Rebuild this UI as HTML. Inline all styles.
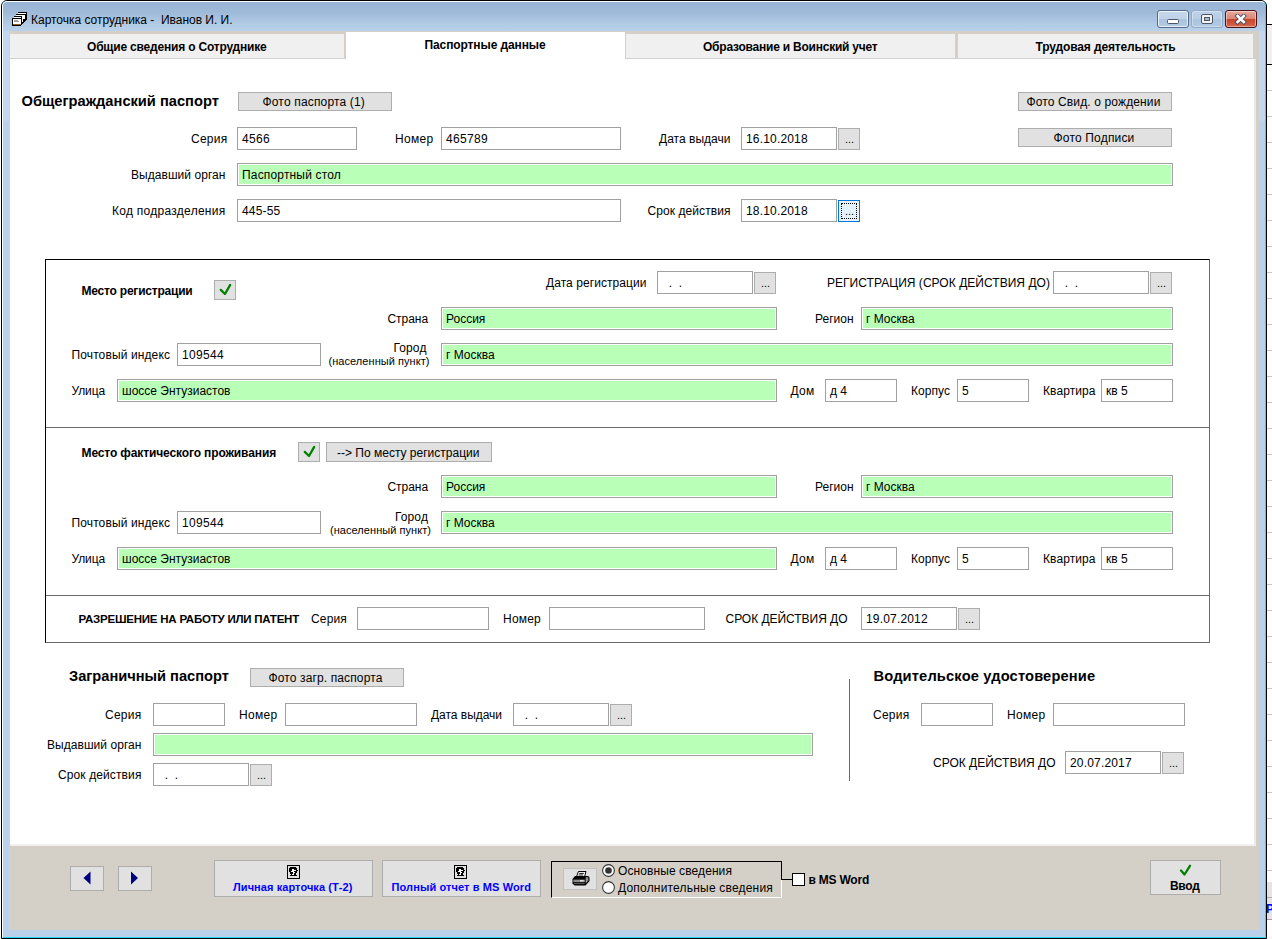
<!DOCTYPE html>
<html lang="ru"><head><meta charset="utf-8"><title>Карточка сотрудника</title>
<style>
html,body{margin:0;padding:0}
body{width:1272px;height:939px;overflow:hidden;background:#fff;position:relative;font-family:"Liberation Sans",sans-serif;font-size:12px;color:#000}
div,span,svg,i{position:absolute;box-sizing:border-box}
.t{white-space:nowrap}
.win{left:1px;top:0;width:1266px;height:939px;border:1px solid #000;border-radius:6px 6px 0 0;background:linear-gradient(#c3d7ee 0,#c3d7ee 118px,#b9d1ea 122px);overflow:hidden}
.win .hi{left:0;top:0;width:1264px;height:937px;border-style:solid;border-width:1px;border-color:#fff #27d5f5 #27d5f5 #fff;border-radius:5px 5px 0 0}
.tbar{left:1px;top:1px;width:1262px;height:29px;background:linear-gradient(#98b4d4 0,#9fbad9 35%,#b3cce6 80%,#b9d1ea 100%)}
.client{left:9px;top:31px;width:1250px;height:899px;background:#d4d0c8}
.tab{top:34px;height:25px;background:#f0f0f0;border-bottom:1px solid #d0d0d0}
.page{left:10px;top:59px;width:1246px;height:787px;background:#fff;border-right:2px solid #e9e9e9;border-bottom:2px solid #f0f0f0}
.in{background:#fff;border:1px solid #a0a0a0}
.in.g{background:#baffb8;box-shadow:inset 0 0 0 1px #fff}
.b{background:#e1e1e1;border:1px solid #adadad}
.b.bf{background:#e5f1fb;border-color:#0078d7}
.b.bf i{left:2px;top:2px;right:2px;bottom:2px;border:1px dotted #000}
.frame{border:1px solid;border-color:#000 #6a6a6a #6a6a6a #000}
.hl{height:1px;background:#6a6a6a}
.vl{width:1px;background:#6a6a6a}

</style></head><body>
<div class="bgr" style="left:1267px;top:0;width:5px;height:939px;background:#fff"><div style="left:0;top:24px;width:5px;height:41px;background:#f0f0f0;border-top:1px solid #000;border-bottom:1px solid #000"></div><div style="left:0;top:90px;width:5px;height:1px;background:#c8c8c8"></div><div style="left:0;top:116px;width:5px;height:1px;background:#c8c8c8"></div><div style="left:0;top:142px;width:5px;height:1px;background:#c8c8c8"></div><div style="left:0;top:168px;width:5px;height:1px;background:#c8c8c8"></div><div style="left:0;top:194px;width:5px;height:1px;background:#c8c8c8"></div><div style="left:0;top:220px;width:5px;height:1px;background:#c8c8c8"></div><div style="left:0;top:246px;width:5px;height:1px;background:#c8c8c8"></div><div style="left:0;top:272px;width:5px;height:1px;background:#c8c8c8"></div><div style="left:0;top:298px;width:5px;height:1px;background:#c8c8c8"></div><div style="left:0;top:324px;width:5px;height:1px;background:#c8c8c8"></div><div style="left:0;top:350px;width:5px;height:1px;background:#c8c8c8"></div><div style="left:0;top:376px;width:5px;height:1px;background:#c8c8c8"></div><div style="left:0;top:402px;width:5px;height:1px;background:#c8c8c8"></div><div style="left:0;top:428px;width:5px;height:1px;background:#c8c8c8"></div><div style="left:0;top:454px;width:5px;height:1px;background:#c8c8c8"></div><div style="left:0;top:480px;width:5px;height:1px;background:#c8c8c8"></div><div style="left:0;top:506px;width:5px;height:1px;background:#c8c8c8"></div><div style="left:0;top:532px;width:5px;height:1px;background:#c8c8c8"></div><div style="left:0;top:558px;width:5px;height:1px;background:#c8c8c8"></div><div style="left:0;top:584px;width:5px;height:1px;background:#c8c8c8"></div><div style="left:0;top:610px;width:5px;height:1px;background:#c8c8c8"></div><div style="left:0;top:636px;width:5px;height:1px;background:#c8c8c8"></div><div style="left:0;top:662px;width:5px;height:1px;background:#c8c8c8"></div><div style="left:0;top:688px;width:5px;height:1px;background:#c8c8c8"></div><div style="left:0;top:714px;width:5px;height:1px;background:#c8c8c8"></div><div style="left:0;top:740px;width:5px;height:1px;background:#c8c8c8"></div><div style="left:0;top:766px;width:5px;height:1px;background:#c8c8c8"></div><div style="left:0;top:792px;width:5px;height:1px;background:#c8c8c8"></div><div style="left:0;top:818px;width:5px;height:1px;background:#c8c8c8"></div><div style="left:0;top:844px;width:5px;height:1px;background:#c8c8c8"></div><div style="left:0;top:870px;width:5px;height:1px;background:#c8c8c8"></div><div style="left:0;top:882px;width:5px;height:38px;background:#e4e4e4;border-bottom:1px solid #a0a0a0"></div><div style="left:0;top:897px;width:5px;height:1px;background:#b0b0b0"></div><span class="t" style="left:-1px;top:902px;font-size:12px;line-height:15px;font-weight:bold;color:#00f">Р</span></div>
<div class="win"><div class="tbar"></div><div class="hi"></div></div>
<div class="client"></div>
<div class="tab" style="left:10px;width:334px"></div>
<div class="tab" style="left:626px;width:329px"></div>
<div class="tab" style="left:958px;width:295px"></div>
<div class="page"></div>
<div style="left:346px;top:32px;width:279px;height:30px;background:#fff"></div>
<svg width="17" height="16" viewBox="0 0 17 16" style="left:11px;top:11px" shape-rendering="crispEdges"><path d="M6.5 0.5 H15.5 V8.5 L10.5 14.5 H0.5 V6.5 H2.5 V4.5 H4.5 V2.5 H6.5 Z" fill="#000"/><path d="M7 1.5 H14.5 V3 H7 Z" fill="#fff"/><path d="M5 3.5 H13.5 V8 H11 V5 H5 Z" fill="#fff"/><path d="M3 5.5 H10 V7 H3 Z" fill="#fff"/><rect x="1.5" y="7.5" width="8.5" height="5" fill="#fff"/><path d="M11.5 6 V11" stroke="#fff" stroke-width="1"/><path d="M2.5 9 H7 M3 10.8 H8" stroke="#888" stroke-width="0.8"/><path d="M1.5 13 H10" stroke="#8a5a20" stroke-width="1"/></svg>
<div class="cb" style="left:1157px;top:10px;width:32px;height:18px;border:1px solid #54688a;border-radius:3px;background:linear-gradient(#c4d6ea 0,#c0d3e8 48%,#a9c2de 52%,#b4cbe4 100%);box-shadow:inset 0 0 0 1px rgba(255,255,255,.75)"><div style="left:9px;top:8px;width:12px;height:5px;background:#fff;border:1px solid #4b5566;border-radius:1.5px"></div></div>
<div class="cb" style="left:1191px;top:10px;width:32px;height:18px;border:1px solid #93a9c5;border-radius:3px;background:linear-gradient(#bdd1e8 0,#b9cee6 48%,#abc4df 52%,#b3cae3 100%);box-shadow:inset 0 0 0 1px rgba(255,255,255,.35)"><div style="left:9px;top:3px;width:12px;height:10px;background:#f4f4f4;border:1px solid #4b5566;border-radius:2px"><div style="left:2px;top:2px;width:6px;height:4px;border:1px solid #4b5566;background:#aab8cc"></div></div></div>
<div class="cb" style="left:1225px;top:10px;width:32px;height:18px;border:1px solid #4a1118;border-radius:3px;background:linear-gradient(#e9a99c 0,#dd8674 48%,#c8452b 52%,#d3674c 100%);box-shadow:inset 0 0 0 1px rgba(255,255,255,.45)"><svg width="14" height="11" viewBox="0 0 14 11" style="left:8px;top:3px"><path d="M3.6 2 L9.8 8 M9.8 2 L3.6 8" stroke="#4a4f66" stroke-width="4.4" stroke-linecap="square"/><path d="M3.6 2 L9.8 8 M9.8 2 L3.6 8" stroke="#fff" stroke-width="2.6" stroke-linecap="square"/></svg></div>

<span class="t" style="left:21.50px;top:92.00px;font-size:14.67px;line-height:18px;font-weight:bold;">Общегражданский паспорт</span>
<div class="b" style="left:238px;top:92px;width:154px;height:19px;"></div>
<span class="t" style="left:262.50px;top:94.00px;font-size:12px;line-height:16px;letter-spacing:0.166px;">Фото паспорта (1)</span>
<div class="b" style="left:1018px;top:92px;width:154px;height:19px;"></div>
<span class="t" style="left:1026.50px;top:94.00px;font-size:12px;line-height:16px;letter-spacing:0.130px;">Фото Свид. о рождении</span>
<div class="b" style="left:1018px;top:128px;width:154px;height:19px;"></div>
<span class="t" style="left:1053.50px;top:130.00px;font-size:12px;line-height:16px;letter-spacing:0.180px;">Фото Подписи</span>
<span class="t" style="left:191.00px;top:131.00px;font-size:12px;line-height:16px;letter-spacing:0.257px;">Серия</span>
<div class="in" style="left:237px;top:127px;width:120px;height:23px;"></div>
<span class="t" style="left:242.00px;top:131.00px;font-size:12px;line-height:16px;white-space:pre;letter-spacing:0.33px;">4566</span>
<span class="t" style="left:395.00px;top:131.00px;font-size:12px;line-height:16px;letter-spacing:0.313px;">Номер</span>
<div class="in" style="left:441px;top:127px;width:180px;height:23px;"></div>
<span class="t" style="left:446.00px;top:131.00px;font-size:12px;line-height:16px;white-space:pre;letter-spacing:0.33px;">465789</span>
<span class="t" style="left:659.00px;top:131.00px;font-size:12px;line-height:16px;letter-spacing:0.021px;">Дата выдачи</span>
<div class="in" style="left:741px;top:127px;width:96px;height:23px;"></div>
<span class="t" style="left:746.00px;top:131.00px;font-size:12px;line-height:16px;white-space:pre;letter-spacing:0.17px;">16.10.2018</span>
<div class="b" style="left:838px;top:128px;width:22px;height:22px;"></div>
<span class="t" style="left:845.00px;top:132.00px;font-size:11px;line-height:14px;">...</span>
<span class="t" style="left:131.00px;top:167.00px;font-size:12px;line-height:16px;letter-spacing:0.050px;">Выдавший орган</span>
<div class="in g" style="left:237px;top:163px;width:936px;height:23px;"></div>
<span class="t" style="left:242.00px;top:167.00px;font-size:12px;line-height:16px;white-space:pre;letter-spacing:0.17px;">Паспортный стол</span>
<span class="t" style="left:112.00px;top:203.00px;font-size:12px;line-height:16px;letter-spacing:0.272px;">Код подразделения</span>
<div class="in" style="left:237px;top:199px;width:384px;height:23px;"></div>
<span class="t" style="left:242.00px;top:203.00px;font-size:12px;line-height:16px;white-space:pre;letter-spacing:0.17px;">445-55</span>
<span class="t" style="left:647.50px;top:203.00px;font-size:12px;line-height:16px;letter-spacing:0.073px;">Срок действия</span>
<div class="in" style="left:741px;top:199px;width:96px;height:23px;"></div>
<span class="t" style="left:746.00px;top:203.00px;font-size:12px;line-height:16px;white-space:pre;letter-spacing:0.17px;">18.10.2018</span>
<div class="b bf" style="left:838px;top:200px;width:22px;height:22px;"><i></i></div>
<span class="t" style="left:845.00px;top:204.00px;font-size:11px;line-height:14px;">...</span>
<div class="frame" style="left:45px;top:259px;width:1165px;height:384px"></div>
<div class="hl" style="left:46px;top:427px;width:1163px"></div>
<div class="hl" style="left:46px;top:595px;width:1163px"></div>
<span class="t" style="left:81.50px;top:283.00px;font-size:12px;line-height:16px;letter-spacing:-0.213px;font-weight:bold;">Место регистрации</span>
<div class="b" style="left:214px;top:280px;width:22px;height:20px;"><svg width="22" height="20" viewBox="0 0 22 20" style="left:-1px;top:-1px"><path d="M6.8 9.9 L11 14 L16.2 4.9" fill="none" stroke="#008000" stroke-width="2.3" stroke-linecap="round" stroke-linejoin="round"/></svg></div>
<span class="t" style="left:546.00px;top:275.00px;font-size:12px;line-height:16px;letter-spacing:0.066px;">Дата регистрации</span>
<div class="in" style="left:657px;top:271px;width:96px;height:23px;"></div>
<span class="t" style="left:662.00px;top:275.00px;font-size:12px;line-height:16px;white-space:pre;letter-spacing:0.00px;">  .  .</span>
<div class="b" style="left:754px;top:272px;width:22px;height:22px;"></div>
<span class="t" style="left:761.00px;top:276.00px;font-size:11px;line-height:14px;">...</span>
<span class="t" style="left:827.00px;top:275.00px;font-size:12px;line-height:16px;letter-spacing:0.035px;">РЕГИСТРАЦИЯ (СРОК ДЕЙСТВИЯ ДО)</span>
<div class="in" style="left:1053px;top:271px;width:96px;height:23px;"></div>
<span class="t" style="left:1058.00px;top:275.00px;font-size:12px;line-height:16px;white-space:pre;letter-spacing:0.00px;">  .  .</span>
<div class="b" style="left:1150px;top:272px;width:22px;height:22px;"></div>
<span class="t" style="left:1157.00px;top:276.00px;font-size:11px;line-height:14px;">...</span>
<span class="t" style="left:387.50px;top:311.00px;font-size:12px;line-height:16px;letter-spacing:-0.051px;">Страна</span>
<div class="in g" style="left:441px;top:307px;width:336px;height:23px;"></div>
<span class="t" style="left:446.00px;top:311.00px;font-size:12px;line-height:16px;white-space:pre;letter-spacing:0.00px;">Россия</span>
<span class="t" style="left:815.00px;top:311.00px;font-size:12px;line-height:16px;">Регион</span>
<div class="in g" style="left:861px;top:307px;width:312px;height:23px;"></div>
<span class="t" style="left:866.00px;top:311.00px;font-size:12px;line-height:16px;white-space:pre;letter-spacing:0.00px;">г Москва</span>
<span class="t" style="left:71.50px;top:347.00px;font-size:12px;line-height:16px;letter-spacing:0.117px;">Почтовый индекс</span>
<div class="in" style="left:177px;top:343px;width:144px;height:23px;"></div>
<span class="t" style="left:182.00px;top:347.00px;font-size:12px;line-height:16px;white-space:pre;letter-spacing:0.33px;">109544</span>
<span class="t" style="left:393.50px;top:340.00px;font-size:12px;line-height:16px;letter-spacing:0.109px;">Город</span>
<span class="t" style="left:328.50px;top:354.00px;font-size:11px;line-height:14px;letter-spacing:0.052px;">(населенный пункт)</span>
<div class="in g" style="left:441px;top:343px;width:732px;height:23px;"></div>
<span class="t" style="left:446.00px;top:347.00px;font-size:12px;line-height:16px;white-space:pre;letter-spacing:0.00px;">г Москва</span>
<span class="t" style="left:71.50px;top:383.00px;font-size:12px;line-height:16px;letter-spacing:-0.114px;">Улица</span>
<div class="in g" style="left:117px;top:379px;width:660px;height:23px;"></div>
<span class="t" style="left:122.00px;top:383.00px;font-size:12px;line-height:16px;white-space:pre;letter-spacing:0.00px;">шоссе Энтузиастов</span>
<span class="t" style="left:790.50px;top:383.00px;font-size:12px;line-height:16px;letter-spacing:0.272px;">Дом</span>
<div class="in" style="left:825px;top:379px;width:72px;height:23px;"></div>
<span class="t" style="left:830.00px;top:383.00px;font-size:12px;line-height:16px;white-space:pre;letter-spacing:0.00px;">д 4</span>
<span class="t" style="left:911.00px;top:383.00px;font-size:12px;line-height:16px;letter-spacing:0.050px;">Корпус</span>
<div class="in" style="left:957px;top:379px;width:72px;height:23px;"></div>
<span class="t" style="left:962.00px;top:383.00px;font-size:12px;line-height:16px;white-space:pre;letter-spacing:0.33px;">5</span>
<span class="t" style="left:1043.00px;top:383.00px;font-size:12px;line-height:16px;letter-spacing:0.080px;">Квартира</span>
<div class="in" style="left:1101px;top:379px;width:72px;height:23px;"></div>
<span class="t" style="left:1106.00px;top:383.00px;font-size:12px;line-height:16px;white-space:pre;letter-spacing:0.00px;">кв 5</span>
<span class="t" style="left:81.50px;top:445.00px;font-size:12px;line-height:16px;letter-spacing:-0.120px;font-weight:bold;">Место фактического проживания</span>
<div class="b" style="left:298px;top:442px;width:22px;height:20px;"><svg width="22" height="20" viewBox="0 0 22 20" style="left:-1px;top:-1px"><path d="M6.8 9.9 L11 14 L16.2 4.9" fill="none" stroke="#008000" stroke-width="2.3" stroke-linecap="round" stroke-linejoin="round"/></svg></div>
<div class="b" style="left:326px;top:442px;width:166px;height:20px;"></div>
<span class="t" style="left:337.00px;top:445.00px;font-size:12px;line-height:16px;">--&gt; По месту регистрации</span>
<span class="t" style="left:387.50px;top:479.00px;font-size:12px;line-height:16px;letter-spacing:-0.051px;">Страна</span>
<div class="in g" style="left:441px;top:475px;width:336px;height:23px;"></div>
<span class="t" style="left:446.00px;top:479.00px;font-size:12px;line-height:16px;white-space:pre;letter-spacing:0.00px;">Россия</span>
<span class="t" style="left:815.00px;top:479.00px;font-size:12px;line-height:16px;">Регион</span>
<div class="in g" style="left:861px;top:475px;width:312px;height:23px;"></div>
<span class="t" style="left:866.00px;top:479.00px;font-size:12px;line-height:16px;white-space:pre;letter-spacing:0.00px;">г Москва</span>
<span class="t" style="left:71.50px;top:515.00px;font-size:12px;line-height:16px;letter-spacing:0.117px;">Почтовый индекс</span>
<div class="in" style="left:177px;top:511px;width:144px;height:23px;"></div>
<span class="t" style="left:182.00px;top:515.00px;font-size:12px;line-height:16px;white-space:pre;letter-spacing:0.33px;">109544</span>
<span class="t" style="left:395.00px;top:509.00px;font-size:12px;line-height:16px;letter-spacing:0.109px;">Город</span>
<span class="t" style="left:330.00px;top:523.00px;font-size:11px;line-height:14px;letter-spacing:0.052px;">(населенный пункт)</span>
<div class="in g" style="left:441px;top:511px;width:732px;height:23px;"></div>
<span class="t" style="left:446.00px;top:515.00px;font-size:12px;line-height:16px;white-space:pre;letter-spacing:0.00px;">г Москва</span>
<span class="t" style="left:71.50px;top:551.00px;font-size:12px;line-height:16px;letter-spacing:-0.114px;">Улица</span>
<div class="in g" style="left:117px;top:547px;width:660px;height:23px;"></div>
<span class="t" style="left:122.00px;top:551.00px;font-size:12px;line-height:16px;white-space:pre;letter-spacing:0.00px;">шоссе Энтузиастов</span>
<span class="t" style="left:790.50px;top:551.00px;font-size:12px;line-height:16px;letter-spacing:0.272px;">Дом</span>
<div class="in" style="left:825px;top:547px;width:72px;height:23px;"></div>
<span class="t" style="left:830.00px;top:551.00px;font-size:12px;line-height:16px;white-space:pre;letter-spacing:0.00px;">д 4</span>
<span class="t" style="left:911.00px;top:551.00px;font-size:12px;line-height:16px;letter-spacing:0.050px;">Корпус</span>
<div class="in" style="left:957px;top:547px;width:72px;height:23px;"></div>
<span class="t" style="left:962.00px;top:551.00px;font-size:12px;line-height:16px;white-space:pre;letter-spacing:0.33px;">5</span>
<span class="t" style="left:1043.00px;top:551.00px;font-size:12px;line-height:16px;letter-spacing:0.080px;">Квартира</span>
<div class="in" style="left:1101px;top:547px;width:72px;height:23px;"></div>
<span class="t" style="left:1106.00px;top:551.00px;font-size:12px;line-height:16px;white-space:pre;letter-spacing:0.00px;">кв 5</span>
<span class="t" style="left:78.50px;top:612.00px;font-size:11.5px;line-height:14px;letter-spacing:-0.221px;font-weight:bold;">РАЗРЕШЕНИЕ НА РАБОТУ ИЛИ ПАТЕНТ</span>
<span class="t" style="left:311.00px;top:611.00px;font-size:12px;line-height:16px;letter-spacing:0.157px;">Серия</span>
<div class="in" style="left:357px;top:607px;width:132px;height:23px;"></div>
<span class="t" style="left:503.00px;top:611.00px;font-size:12px;line-height:16px;letter-spacing:0.213px;">Номер</span>
<div class="in" style="left:549px;top:607px;width:156px;height:23px;"></div>
<span class="t" style="left:725.50px;top:611.00px;font-size:12px;line-height:16px;letter-spacing:-0.032px;">СРОК ДЕЙСТВИЯ ДО</span>
<div class="in" style="left:861px;top:607px;width:96px;height:23px;"></div>
<span class="t" style="left:866.00px;top:611.00px;font-size:12px;line-height:16px;white-space:pre;letter-spacing:0.17px;">19.07.2012</span>
<div class="b" style="left:958px;top:608px;width:22px;height:22px;"></div>
<span class="t" style="left:965.00px;top:612.00px;font-size:11px;line-height:14px;">...</span>
<span class="t" style="left:69.00px;top:667.00px;font-size:14.67px;line-height:18px;letter-spacing:-0.021px;font-weight:bold;">Заграничный паспорт</span>
<div class="b" style="left:250px;top:668px;width:154px;height:19px;"></div>
<span class="t" style="left:268.50px;top:670.00px;font-size:12px;line-height:16px;letter-spacing:0.127px;">Фото загр. паспорта</span>
<span class="t" style="left:105.00px;top:707.00px;font-size:12px;line-height:16px;letter-spacing:0.257px;">Серия</span>
<div class="in" style="left:153px;top:703px;width:72px;height:23px;"></div>
<span class="t" style="left:239.00px;top:707.00px;font-size:12px;line-height:16px;letter-spacing:0.313px;">Номер</span>
<div class="in" style="left:285px;top:703px;width:132px;height:23px;"></div>
<span class="t" style="left:431.00px;top:707.00px;font-size:12px;line-height:16px;letter-spacing:-0.024px;">Дата выдачи</span>
<div class="in" style="left:513px;top:703px;width:96px;height:23px;"></div>
<span class="t" style="left:518.00px;top:707.00px;font-size:12px;line-height:16px;white-space:pre;letter-spacing:0.00px;">  .  .</span>
<div class="b" style="left:610px;top:704px;width:22px;height:22px;"></div>
<span class="t" style="left:617.00px;top:708.00px;font-size:11px;line-height:14px;">...</span>
<span class="t" style="left:47.00px;top:737.00px;font-size:12px;line-height:16px;letter-spacing:0.050px;">Выдавший орган</span>
<div class="in g" style="left:153px;top:733px;width:660px;height:23px;"></div>
<span class="t" style="left:58.00px;top:767.00px;font-size:12px;line-height:16px;letter-spacing:0.112px;">Срок действия</span>
<div class="in" style="left:153px;top:763px;width:96px;height:23px;"></div>
<span class="t" style="left:158.00px;top:767.00px;font-size:12px;line-height:16px;white-space:pre;letter-spacing:0.00px;">  .  .</span>
<div class="b" style="left:250px;top:764px;width:22px;height:22px;"></div>
<span class="t" style="left:257.00px;top:768.00px;font-size:11px;line-height:14px;">...</span>
<div class="vl" style="left:849px;top:679px;height:102px"></div>
<span class="t" style="left:873.50px;top:667.00px;font-size:14.67px;line-height:18px;letter-spacing:0.154px;font-weight:bold;">Водительское удостоверение</span>
<span class="t" style="left:873.00px;top:707.00px;font-size:12px;line-height:16px;letter-spacing:0.257px;">Серия</span>
<div class="in" style="left:921px;top:703px;width:72px;height:23px;"></div>
<span class="t" style="left:1007.00px;top:707.00px;font-size:12px;line-height:16px;letter-spacing:0.313px;">Номер</span>
<div class="in" style="left:1053px;top:703px;width:132px;height:23px;"></div>
<span class="t" style="left:933.00px;top:755.00px;font-size:12px;line-height:16px;">СРОК ДЕЙСТВИЯ ДО</span>
<div class="in" style="left:1065px;top:751px;width:96px;height:23px;"></div>
<span class="t" style="left:1070.00px;top:755.00px;font-size:12px;line-height:16px;white-space:pre;letter-spacing:0.17px;">20.07.2017</span>
<div class="b" style="left:1162px;top:752px;width:22px;height:22px;"></div>
<span class="t" style="left:1169.00px;top:756.00px;font-size:11px;line-height:14px;">...</span>
<span class="t" style="left:31.00px;top:12.00px;font-size:12px;line-height:16px;letter-spacing:-0.017px;white-space:pre;">Карточка сотрудника -  Иванов И. И.</span>
<span class="t" style="left:87.00px;top:39.00px;font-size:12px;line-height:16px;letter-spacing:-0.195px;font-weight:bold;">Общие сведения о Сотруднике</span>
<span class="t" style="left:424.50px;top:37.00px;font-size:12px;line-height:16px;letter-spacing:-0.107px;font-weight:bold;">Паспортные данные</span>
<span class="t" style="left:703.00px;top:39.00px;font-size:12px;line-height:16px;letter-spacing:-0.224px;font-weight:bold;">Образование и Воинский учет</span>
<span class="t" style="left:1035.50px;top:39.00px;font-size:12px;line-height:16px;letter-spacing:-0.132px;font-weight:bold;">Трудовая деятельность</span>
<div class="b" style="left:70px;top:866px;width:34px;height:25px;"><svg width="34" height="25" viewBox="0 0 34 25" style="left:-1px;top:-1px"><path d="M20.5 5.5 L20.5 18.5 L13.5 12 Z" fill="#000080"/></svg></div>
<div class="b" style="left:118px;top:866px;width:34px;height:25px;"><svg width="34" height="25" viewBox="0 0 34 25" style="left:-1px;top:-1px"><path d="M13 5.5 L13 18.5 L20 12 Z" fill="#000080"/></svg></div>
<div class="b" style="left:214px;top:860px;width:159px;height:37px;"><svg width="13" height="14" viewBox="0 0 13 14" shape-rendering="crispEdges" style="left:72px;top:4px"><rect x="0" y="0" width="13" height="14" fill="#000"/><rect x="1" y="1" width="11" height="12" fill="#e1e1e1"/><path d="M3 2 H9 V3 H10 V5 H11 V6 H10 V8 H9 V10 H10 V11 H3 V10 H4 V9 H3 V7 H2 V3 H3 Z" fill="#000"/><path d="M5 4 H7 V5 H8 V6 H7 V7 H8 V8 H7 V10 H5 V9 H6 V7 H4 V6 H5 Z" fill="#fff"/><rect x="8" y="5" width="1" height="1" fill="#fff"/></svg></div>
<span class="t" style="left:233.00px;top:880.00px;font-size:11px;line-height:14px;letter-spacing:0.077px;font-weight:bold;color:#0000ff;">Личная карточка (Т-2)</span>
<div class="b" style="left:382px;top:860px;width:159px;height:37px;"><svg width="13" height="14" viewBox="0 0 13 14" shape-rendering="crispEdges" style="left:71px;top:4px"><rect x="0" y="0" width="13" height="14" fill="#000"/><rect x="1" y="1" width="11" height="12" fill="#e1e1e1"/><path d="M3 2 H9 V3 H10 V5 H11 V6 H10 V8 H9 V10 H10 V11 H3 V10 H4 V9 H3 V7 H2 V3 H3 Z" fill="#000"/><path d="M5 4 H7 V5 H8 V6 H7 V7 H8 V8 H7 V10 H5 V9 H6 V7 H4 V6 H5 Z" fill="#fff"/><rect x="8" y="5" width="1" height="1" fill="#fff"/></svg></div>
<span class="t" style="left:391.50px;top:880.00px;font-size:11px;line-height:14px;letter-spacing:0.109px;font-weight:bold;color:#0000ff;">Полный отчет в MS Word</span>
<div style="left:551px;top:861px;width:231px;height:37px;border-style:solid;border-width:1px;border-color:#000 #fff #fff #000"></div>
<div style="left:781px;top:861px;width:1px;height:19px;background:#000"></div>
<div style="left:781px;top:879px;width:11px;height:1px;background:#000"></div>
<div class="b" style="left:563px;top:868px;width:34px;height:22px;border-color:#c0c0c0;"><svg width="18" height="15" viewBox="0 0 18 15" style="left:8px;top:2px"><path d="M4.6 5.5 L6.4 0.5 L14 0.5 L12.6 5.5 Z" fill="#fff" stroke="#000" stroke-width="1"/><path d="M7.2 2.4 H11.8 M6.6 4 H11.2" stroke="#000" stroke-width="0.9"/><path d="M3 5 H16 L17.5 6.2 V10 L13.5 14.5 H2.5 L0.5 12.5 V8 Z" fill="#000"/><path d="M13.6 6.3 L16.4 6.3 L16.4 9.6 L13.6 12.8 Z" fill="#777"/><path d="M14.2 7 L15.8 7 M14.2 9 L15.8 8.4 M14 11 L15 10" stroke="#ddd" stroke-width="0.6"/><rect x="1.3" y="8.6" width="11.6" height="2.6" fill="#8a8a8a"/><rect x="8" y="9.3" width="3.6" height="1.1" fill="#fff"/><path d="M2 12.6 H12.6" stroke="#bbb" stroke-width="0.5"/></svg></div>
<svg width="13" height="13" viewBox="0 0 13 13" style="left:602px;top:864px"><circle cx="6.5" cy="6.5" r="5.9" fill="#fff" stroke="#333" stroke-width="1.1"/><circle cx="6.5" cy="6.5" r="3.3" fill="#333"/></svg>
<svg width="13" height="13" viewBox="0 0 13 13" style="left:602px;top:881px"><circle cx="6.5" cy="6.5" r="5.9" fill="#fff" stroke="#333" stroke-width="1.1"/></svg>
<span class="t" style="left:618.00px;top:863.00px;font-size:12px;line-height:16px;letter-spacing:0.093px;">Основные сведения</span>
<span class="t" style="left:618.00px;top:880.00px;font-size:12px;line-height:16px;letter-spacing:0.197px;">Дополнительные сведения</span>
<div style="left:792px;top:873px;width:13px;height:13px;background:#fff;border:1px solid #000"></div>
<span class="t" style="left:808.50px;top:872.00px;font-size:12px;line-height:16px;letter-spacing:-0.220px;font-weight:bold;">в MS Word</span>
<div class="b" style="left:1150px;top:860px;width:71px;height:35px;"><svg width="14" height="13" viewBox="0 0 14 13" style="left:28px;top:3px"><path d="M2 6.5 L5.5 10.5 L11 1.8" fill="none" stroke="#008000" stroke-width="2.3" stroke-linecap="round" stroke-linejoin="round"/></svg></div>
<span class="t" style="left:1170.00px;top:878.00px;font-size:12px;line-height:16px;letter-spacing:-0.294px;font-weight:bold;">Ввод</span>

</body></html>
